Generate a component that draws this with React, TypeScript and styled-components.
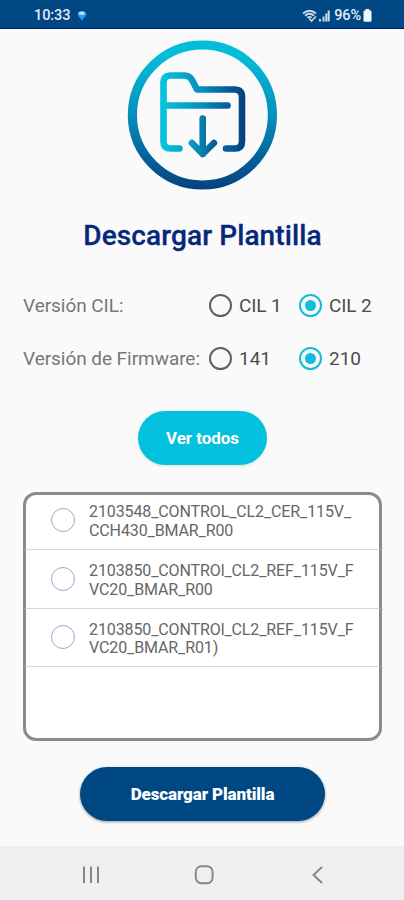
import React, { useState } from "react";
import styled, { createGlobalStyle } from "styled-components";

const GlobalStyle = createGlobalStyle`
  * { box-sizing: border-box; }
  body { margin: 0; background: #fafafa; font-family: Roboto, sans-serif; }
  button { font-family: inherit; border: 0; padding: 0; background: none; cursor: pointer; }
`;

const Screen = styled.div`
  width: 404px;
  height: 900px;
  display: flex;
  flex-direction: column;
  background: #fafafa;
  overflow: hidden;
`;

const StatusBar = styled.header`
  height: 29px;
  flex: none;
  display: flex;
  align-items: center;
  justify-content: space-between;
  padding: 3px 32px 0 34px;
  background: #004884;
  border-bottom: 1px solid #001a72;
  color: #e4ebf5;
`;

const StatusGroup = styled.div<{ $gap: number }>`
  display: flex;
  align-items: center;
  gap: ${(p) => p.$gap}px;
`;

const StatusText = styled.span`
  font-size: 14.5px;
  line-height: 18px;
  font-weight: 500;
  letter-spacing: -0.1px;
`;

const Main = styled.main`
  flex: 1;
  display: flex;
  flex-direction: column;
  align-items: center;
  padding-top: 11px;
`;

const Title = styled.h1`
  margin: 28px 0 0 1px;
  height: 36px;
  line-height: 36px;
  font-size: 28px;
  font-weight: 500;
  letter-spacing: 0.1px;
  color: #06287c;
  -webkit-text-stroke: 0.3px #06287c;
`;

const Options = styled.section`
  width: 100%;
  margin-top: 25px;
  padding-left: 23px;
`;

const OptionRow = styled.div`
  display: grid;
  grid-template-columns: 186px 90px 100px;
  align-items: center;
  height: 53px;
`;

const OptionLabel = styled.span`
  font-size: 19px;
  letter-spacing: -0.05px;
  color: #777;
  white-space: nowrap;
`;

const Choice = styled.button<{ $spacing: number }>`
  display: flex;
  align-items: center;
  gap: 7px;
  font-size: 19px;
  line-height: 24px;
  letter-spacing: ${(p) => p.$spacing}px;
  color: #4c4c4c;
  white-space: nowrap;
`;

const Radio = styled.span<{ $on: boolean }>`
  flex: none;
  width: 23px;
  height: 23px;
  border-radius: 50%;
  border: 2px solid ${(p) => (p.$on ? "#10bddb" : "#606060")};
  display: grid;
  place-items: center;

  &::after {
    content: "";
    width: 11px;
    height: 11px;
    border-radius: 50%;
    background: ${(p) => (p.$on ? "#10bddb" : "transparent")};
  }
`;

const PillButton = styled.button<{ $primary?: boolean }>`
  width: ${(p) => (p.$primary ? 245 : 129)}px;
  height: 54px;
  flex: none;
  margin: 26px 0 0 1px;
  border-radius: 27px;
  background: ${(p) => (p.$primary ? "#004884" : "#03c0df")};
  box-shadow: 0 1px 3px ${(p) => (p.$primary ? "rgba(0, 0, 0, 0.4)" : "rgba(0, 0, 0, 0.12)")};
  color: #fff;
  font-size: 17px;
  font-weight: ${(p) => (p.$primary ? 900 : 700)};
  letter-spacing: ${(p) => (p.$primary ? -0.12 : -0.05)}px;
`;

const List = styled.ul`
  list-style: none;
  width: 359px;
  height: 249px;
  flex: none;
  margin: 26.5px 0 0 1px;
  padding: 0;
  border: 3px solid #8b8b8b;
  border-radius: 13px;
  background: #fff;
`;

const ListItem = styled.li`
  height: 58.8px;
  margin: 0 -4px;
  padding-left: 29px;
  display: flex;
  align-items: center;
  gap: 14px;
  border-bottom: 1px solid rgba(190, 190, 190, 0.6);

  &:first-child {
    margin-top: -3.5px;
  }
`;

const ItemRadio = styled.button`
  width: 24px;
  height: 24px;
  flex: none;
  border: 1.5px solid #93aecb;
  border-radius: 50%;
`;

const ItemText = styled.span`
  padding-top: 4px;
  font-size: 16px;
  line-height: 18.4px;
  letter-spacing: -0.11px;
  color: #666;
  white-space: nowrap;
`;

const NavBar = styled.nav`
  height: 54px;
  flex: none;
  display: flex;
  align-items: center;
  justify-content: center;
  gap: 89px;
  padding: 4px 0 0 4px;
  background: #f0f0f0;
`;

const NavButton = styled.button`
  width: 24px;
  height: 24px;

  svg { display: block; }
`;

const LocationIcon = () => (
  <svg width="10" height="12" viewBox="0 0 10 12">
    <path d="M.7 4C.7 0 9.300 0 9.300 4C9.300 7 6.300 7.500 5 11C3.700 7.500 .7 7 .7 4Z" fill="#269cf0" />
    <ellipse cx="4.8" cy="3.3" rx="3" ry="1.7" fill="#a6e5f7" />
  </svg>
);

const SignalIcons = () => (
  <svg width="29" height="14" viewBox="0 0 29 14" fill="none" stroke="#c9daeb">
    <path d="M1 4.5Q7.5-1 14 4.5M3 6.7Q7.5 2.9 12 6.7M5.3 8.7Q7.5 7 9.7 8.7" strokeWidth="1.8" />
    <path d="M7 9.5L9.5 12L14 7.5" strokeWidth="1.6" />
    <path d="M18 10V12.5M21.5 7.5V12.5M24.3 4.5V12.5M26.7 1.5V12.5" strokeWidth="2" />
  </svg>
);

const BatteryIcon = () => (
  <svg width="9" height="13" viewBox="0 0 9 13" fill="#f3f7fb">
    <rect x="2.5" y="0" width="4" height="3" rx=".6" />
    <rect x=".5" y="1.5" width="8" height="11.2" rx="1.3" />
  </svg>
);

const FolderDownloadIcon = () => (
  <svg width="150" height="150" viewBox="0 0 150 150" fill="none">
    <defs>
      <linearGradient id="ring" x1="0" y1="0" x2="0" y2="150" gradientUnits="userSpaceOnUse">
        <stop offset=".1" stopColor="#04bdd9" />
        <stop offset=".5" stopColor="#048fbd" />
        <stop offset="1" stopColor="#04417f" />
      </linearGradient>
      <linearGradient id="folder" x1="33" y1="0" x2="118" y2="0" gradientUnits="userSpaceOnUse">
        <stop offset=".06" stopColor="#08c0dc" />
        <stop offset=".52" stopColor="#0789b8" />
        <stop offset="1" stopColor="#073e80" />
      </linearGradient>
      <linearGradient id="arrow" x1="60" y1="0" x2="91" y2="0" gradientUnits="userSpaceOnUse">
        <stop stopColor="#08a5c9" />
        <stop offset="1" stopColor="#075591" />
      </linearGradient>
    </defs>
    <circle cx="75.4" cy="75" r="70" stroke="url(#ring)" strokeWidth="9.2" />
    <g strokeWidth="6.6" strokeLinecap="round" strokeLinejoin="round">
      <path
        d="M52.5 108.5H43.5Q36.5 108.5 36.5 101.5V43Q36.5 35.5 44 35.5H57.5Q62.5 35.5 65 40L70 49.5H107.5Q115 49.5 115 57V101.5Q115 108.5 108 108.5H99M36.5 65.5H100.5"
        stroke="url(#folder)"
      />
      <path d="M75.7 78.5V114M64.9 103L75.7 114L86.9 103" stroke="url(#arrow)" />
    </g>
  </svg>
);

const options = [
  { label: "Versión CIL:", choices: ["CIL 1", "CIL 2"], spacing: -0.1 },
  { label: "Versión de Firmware:", choices: ["141", "210"], spacing: 0 },
];

const templates = [
  ["2103548_CONTROL_CL2_CER_115V_", "CCH430_BMAR_R00"],
  ["2103850_CONTROl_CL2_REF_115V_F", "VC20_BMAR_R00"],
  ["2103850_CONTROl_CL2_REF_115V_F", "VC20_BMAR_R01)"],
];

export default function App() {
  const [selected, setSelected] = useState([1, 1]);

  const choose = (row: number, choice: number) =>
    setSelected((current) => current.map((value, i) => (i === row ? choice : value)));

  return (
    <Screen>
      <GlobalStyle />
      <StatusBar>
        <StatusGroup $gap={7}>
          <StatusText>10:33</StatusText>
          <LocationIcon />
        </StatusGroup>
        <StatusGroup $gap={2}>
          <StatusGroup $gap={3}>
            <SignalIcons />
            <StatusText>96%</StatusText>
          </StatusGroup>
          <BatteryIcon />
        </StatusGroup>
      </StatusBar>
      <Main>
        <FolderDownloadIcon />
        <Title>Descargar Plantilla</Title>
        <Options>
          {options.map((option, row) => (
            <OptionRow key={option.label}>
              <OptionLabel>{option.label}</OptionLabel>
              {option.choices.map((choice, i) => (
                <Choice key={choice} $spacing={option.spacing} onClick={() => choose(row, i)}>
                  <Radio $on={selected[row] === i} />
                  {choice}
                </Choice>
              ))}
            </OptionRow>
          ))}
        </Options>
        <PillButton>Ver todos</PillButton>
        <List>
          {templates.map(([first, second]) => (
            <ListItem key={first + second}>
              <ItemRadio aria-label={first + second} />
              <ItemText>
                {first}
                <br />
                {second}
              </ItemText>
            </ListItem>
          ))}
        </List>
        <PillButton $primary>Descargar Plantilla</PillButton>
      </Main>
      <NavBar>
        <NavButton aria-label="Recientes">
          <svg width="24" height="24" viewBox="0 0 24 24" stroke="#858585" strokeWidth="2">
            <path d="M5 3.5V20M12 3.5V20M19 3.5V20" />
          </svg>
        </NavButton>
        <NavButton aria-label="Inicio">
          <svg width="24" height="24" viewBox="0 0 24 24" fill="none" stroke="#858585" strokeWidth="1.9">
            <rect x="3.8" y="3.3" width="16.8" height="17" rx="5.5" />
          </svg>
        </NavButton>
        <NavButton aria-label="Atrás">
          <svg width="24" height="24" viewBox="0 0 24 24" fill="none" stroke="#858585" strokeWidth="1.9">
            <path d="M17 4L8.5 12L17 20" />
          </svg>
        </NavButton>
      </NavBar>
    </Screen>
  );
}
